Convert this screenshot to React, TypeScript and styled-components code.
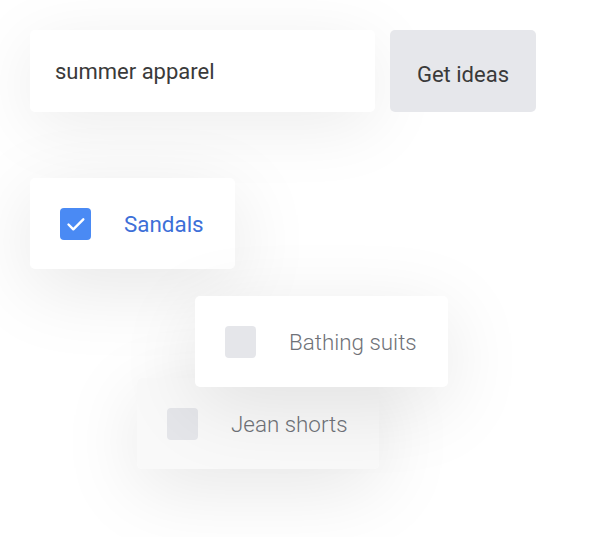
import React from 'react';
import styled, { createGlobalStyle } from 'styled-components';

const GlobalStyle = createGlobalStyle`
  html, body {
    margin: 0;
    padding: 0;
    background: #ffffff;
  }
  body {
    font-family: Roboto, "Liberation Sans", sans-serif;
    overflow: hidden;
  }
`;

const Page = styled.div`
  width: 611px;
  height: 537px;
  padding: 30px;
  box-sizing: border-box;
`;

const SearchRow = styled.div`
  display: flex;
  gap: 15px;
  height: 82px;
`;

const SearchBox = styled.div`
  width: 345px;
  display: flex;
  align-items: center;
  padding: 0 25px;
  box-sizing: border-box;
  background: #fff;
  border-radius: 5px;
  box-shadow: 0 14px 70px rgba(0, 0, 0, 0.08);
  font-size: 22px;
  color: #3a3a3a;
`;

const IdeasButton = styled.div`
  width: 146px;
  display: flex;
  align-items: center;
  justify-content: center;
  padding-top: 6px;
  box-sizing: border-box;
  background: #e6e7eb;
  border-radius: 5px;
  font-size: 22px;
  color: #3a3a3a;
`;

const Board = styled.div`
  position: relative;
  height: 400px;
  margin-left: -30px;
  margin-top: -112px;
`;

const Card = styled.div<{ $x: number; $y: number; $ghost?: boolean }>`
  position: absolute;
  left: ${(p) => p.$x}px;
  top: ${(p) => p.$y}px;
  height: 91px;
  display: flex;
  align-items: center;
  gap: 33px;
  padding: 0 31px 0 30px;
  box-sizing: border-box;
  border-radius: 5px;
  background: ${(p) => (p.$ghost ? 'rgba(249, 249, 249, 0.92)' : '#fff')};
  box-shadow: 0 18px 80px rgba(0, 0, 0, 0.1);
`;

const Box = styled.div<{ $checked?: boolean }>`
  width: 31px;
  height: 32px;
  border-radius: 4px;
  background: ${(p) => (p.$checked ? '#4a8af4' : '#e5e6ea')};
  display: flex;
  align-items: center;
  justify-content: center;
  flex-shrink: 0;
`;

const Label = styled.span<{ $checked?: boolean }>`
  font-size: 22.4px;
  font-weight: ${(p) => (p.$checked ? 400 : 300)};
  color: ${(p) => (p.$checked ? '#3d6fd8' : '#6f7278')};
  white-space: nowrap;
`;

type Idea = { label: string; x: number; y: number; checked?: boolean; ghost?: boolean };

const ideas: Idea[] = [
  { label: 'Sandals', x: 30, y: 178, checked: true },
  { label: 'Jean shorts', x: 137, y: 378, ghost: true },
  { label: 'Bathing suits', x: 195, y: 296 },
];

function CheckMark() {
  return (
    <svg width="20" height="20" viewBox="0 0 20 20" fill="none">
      <path
        d="M2.5 10.5l4.8 4.8 10-10"
        stroke="#fff"
        strokeWidth="2.4"
        strokeLinecap="round"
        strokeLinejoin="round"
      />
    </svg>
  );
}

export default function App() {
  return (
    <Page>
      <GlobalStyle />
      <SearchRow>
        <SearchBox>summer apparel</SearchBox>
        <IdeasButton>Get ideas</IdeasButton>
      </SearchRow>
      <Board>
        {ideas.map((idea) => (
          <Card key={idea.label} $x={idea.x} $y={idea.y} $ghost={idea.ghost}>
            <Box $checked={idea.checked}>{idea.checked && <CheckMark />}</Box>
            <Label $checked={idea.checked}>{idea.label}</Label>
          </Card>
        ))}
      </Board>
    </Page>
  );
}
